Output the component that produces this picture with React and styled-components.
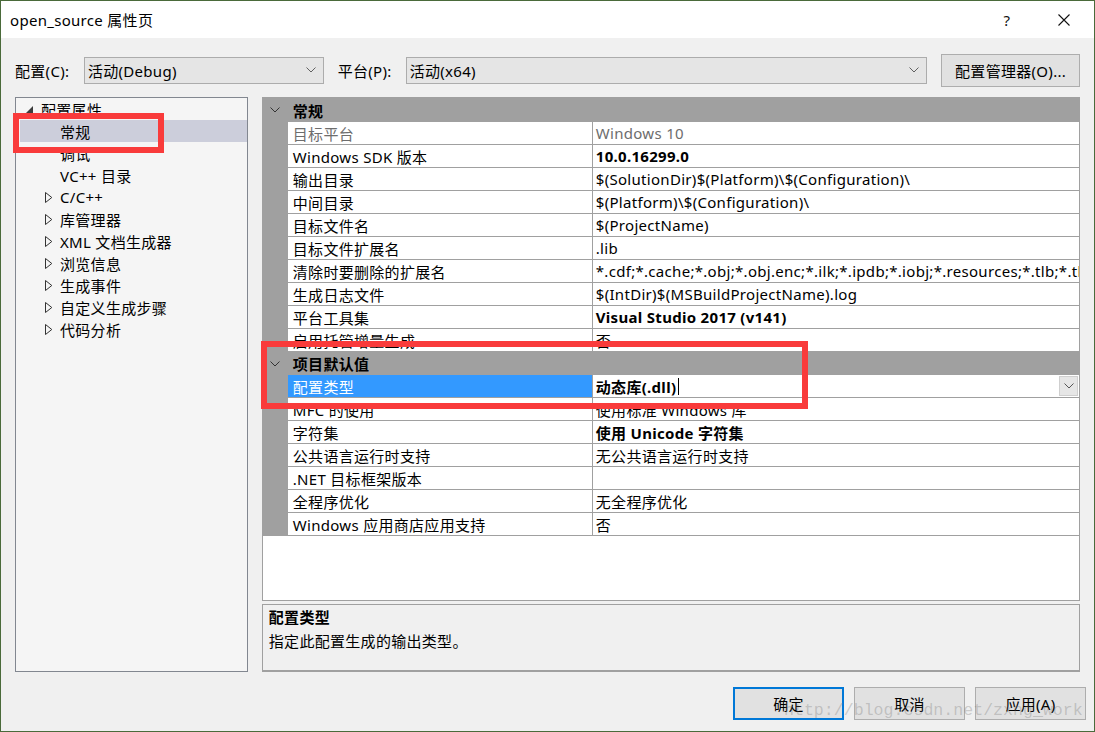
import React from "react";
import styled, { createGlobalStyle } from "styled-components";

const GlobalStyle = createGlobalStyle`
  html, body {
    margin: 0;
    padding: 0;
    background: #f0f0f0;
  }
  body {
    font-family: "Noto Sans", "Noto Sans CJK SC", sans-serif;
  }
`;

const treeItems = [
  { label: "配置属性", level: 0, open: true },
  { label: "常规", level: 1, selected: true },
  { label: "调试", level: 1 },
  { label: "VC++ 目录", level: 1 },
  { label: "C/C++", level: 1, closed: true },
  { label: "库管理器", level: 1, closed: true },
  { label: "XML 文档生成器", level: 1, closed: true },
  { label: "浏览信息", level: 1, closed: true },
  { label: "生成事件", level: 1, closed: true },
  { label: "自定义生成步骤", level: 1, closed: true },
  { label: "代码分析", level: 1, closed: true },
];

const generalRows = [
  { name: "目标平台", value: "Windows 10", muted: true },
  { name: "Windows SDK 版本", value: "10.0.16299.0", bold: true },
  { name: "输出目录", value: "$(SolutionDir)$(Platform)\\$(Configuration)\\" },
  { name: "中间目录", value: "$(Platform)\\$(Configuration)\\" },
  { name: "目标文件名", value: "$(ProjectName)" },
  { name: "目标文件扩展名", value: ".lib" },
  { name: "清除时要删除的扩展名", value: "*.cdf;*.cache;*.obj;*.obj.enc;*.ilk;*.ipdb;*.iobj;*.resources;*.tlb;*.tli;*" },
  { name: "生成日志文件", value: "$(IntDir)$(MSBuildProjectName).log" },
  { name: "平台工具集", value: "Visual Studio 2017 (v141)", bold: true },
  { name: "启用托管增量生成", value: "否" },
];

const defaultRows = [
  { name: "MFC 的使用", value: "使用标准 Windows 库" },
  { name: "字符集", value: "使用 Unicode 字符集", bold: true },
  { name: "公共语言运行时支持", value: "无公共语言运行时支持" },
  { name: ".NET 目标框架版本", value: "" },
  { name: "全程序优化", value: "无全程序优化" },
  { name: "Windows 应用商店应用支持", value: "否" },
];

const Chevron = ({ color = "#606060" }) => (
  <svg width="10" height="6" viewBox="0 0 10 6">
    <polyline points="0.5,0.5 5,5 9.5,0.5" fill="none" stroke={color} strokeWidth="1" />
  </svg>
);

const App = () => {
  return (
    <>
      <GlobalStyle />
      <Window>
        <TitleBar>
          <TitleText>open_source 属性页</TitleText>
          <TitleButtons>
            <HelpBtn>?</HelpBtn>
            <CloseBtn>
              <svg width="12" height="12" viewBox="0 0 12 12">
                <path d="M0.5 0.5 L11.5 11.5 M11.5 0.5 L0.5 11.5" stroke="#111" strokeWidth="1.1" />
              </svg>
            </CloseBtn>
          </TitleButtons>
        </TitleBar>

        <Body>
          <ConfigRow>
            <ConfigLabel $w={69}>配置(C):</ConfigLabel>
            <Combo $w={240}>
              <span>活动(Debug)</span>
              <Chevron />
            </Combo>
            <ConfigLabel $w={68} $ml={14}>平台(P):</ConfigLabel>
            <Combo $w={522}>
              <span>活动(x64)</span>
              <Chevron />
            </Combo>
            <ManagerButton>配置管理器(O)...</ManagerButton>
          </ConfigRow>

          <Main>
            <Tree>
              {treeItems.map((item) => (
                <TreeRow key={item.label} $level={item.level} $selected={item.selected}>
                  <Expander>
                    {item.open && (
                      <svg width="7" height="7" viewBox="0 0 7 7">
                        <polygon points="7,0 7,7 0,7" fill="#3c3c3c" />
                      </svg>
                    )}
                    {item.closed && (
                      <svg width="8" height="11" viewBox="0 0 8 11">
                        <polygon points="0.5,0.5 6.8,5.5 0.5,10.5" fill="none" stroke="#333" strokeWidth="1" />
                      </svg>
                    )}
                  </Expander>
                  <span>{item.label}</span>
                </TreeRow>
              ))}
            </Tree>

            <RightColumn>
              <PropGrid>
                <CategoryRow $h={24}>
                  <Gutter>
                    <Chevron color="#333" />
                  </Gutter>
                  <span>常规</span>
                </CategoryRow>
                {generalRows.map((row) => (
                  <PropRow key={row.name}>
                    <GutterCell />
                    <NameCell $muted={row.muted}>{row.name}</NameCell>
                    <ValueCell $bold={row.bold} $muted={row.muted}>
                      {row.value}
                    </ValueCell>
                  </PropRow>
                ))}
                <CategoryRow $h={23}>
                  <Gutter>
                    <Chevron color="#333" />
                  </Gutter>
                  <span>项目默认值</span>
                </CategoryRow>
                <PropRow>
                  <GutterCell />
                  <NameCell $selected>配置类型</NameCell>
                  <ValueCell $bold>
                    <span>动态库(.dll)</span>
                    <Caret />
                    <DropButton>
                      <Chevron color="#555" />
                    </DropButton>
                  </ValueCell>
                </PropRow>
                {defaultRows.map((row) => (
                  <PropRow key={row.name}>
                    <GutterCell />
                    <NameCell>{row.name}</NameCell>
                    <ValueCell $bold={row.bold}>{row.value}</ValueCell>
                  </PropRow>
                ))}
              </PropGrid>

              <Description>
                <DescTitle>配置类型</DescTitle>
                <DescText>指定此配置生成的输出类型。</DescText>
              </Description>
            </RightColumn>
          </Main>

          <ButtonRow>
            <DialogButton $primary>确定</DialogButton>
            <DialogButton>取消</DialogButton>
            <DialogButton>应用(A)</DialogButton>
          </ButtonRow>
        </Body>

        <Highlight $x={12} $y={112} $w={151} $h={40} />
        <Highlight $x={260} $y={340} $w={547} $h={68} />
        <Watermark>http://blog.csdn.net/zxng_work</Watermark>
      </Window>
    </>
  );
};

const Window = styled.div`
  position: relative;
  width: 1095px;
  height: 732px;
  box-sizing: border-box;
  border: 1px solid #4a6a3a;
  background: #f0f0f0;
  display: flex;
  flex-direction: column;
  font-family: "Noto Sans", "Noto Sans CJK SC", sans-serif;
  font-size: 15px;
  letter-spacing: 0.3px;
  color: #000;
  overflow: hidden;
`;

const TitleBar = styled.div`
  height: 37px;
  background: #fff;
  display: flex;
  align-items: center;
  padding-left: 9px;
  flex-shrink: 0;
`;

const TitleText = styled.div`
  font-size: 15px;
  color: #000;
`;

const TitleButtons = styled.div`
  margin-left: auto;
  display: flex;
  align-items: center;
  height: 100%;
`;

const HelpBtn = styled.div`
  width: 24px;
  text-align: center;
  font-size: 15px;
  color: #111;
  margin-right: 22px;
`;

const CloseBtn = styled.div`
  width: 46px;
  height: 100%;
  display: flex;
  align-items: center;
  justify-content: center;
  margin-right: 7px;
`;

const Body = styled.div`
  flex: 1;
  display: flex;
  flex-direction: column;
  padding: 16px 14px 0 14px;
`;

const ConfigRow = styled.div`
  display: flex;
  align-items: center;
  height: 32px;
`;

const ConfigLabel = styled.div`
  width: ${(p) => p.$w}px;
  margin-left: ${(p) => p.$ml || 0}px;
  white-space: nowrap;
`;

const Combo = styled.div`
  width: ${(p) => p.$w}px;
  height: 27px;
  box-sizing: border-box;
  background: #e5e5e5;
  border: 1px solid #acacac;
  display: flex;
  align-items: center;
  justify-content: space-between;
  padding: 0 7px 0 3px;
`;

const ManagerButton = styled.div`
  margin-left: 14px;
  width: 139px;
  height: 33px;
  box-sizing: border-box;
  background: #e1e1e1;
  border: 1px solid #adadad;
  display: flex;
  align-items: center;
  justify-content: center;
  white-space: nowrap;
`;

const Main = styled.div`
  display: flex;
  gap: 14px;
  margin-top: 11px;
`;

const Tree = styled.div`
  width: 233px;
  height: 575px;
  box-sizing: border-box;
  border: 1px solid #828790;
  background: #f5f5f5;
  padding-left: 4px;
`;

const TreeRow = styled.div`
  height: 22px;
  display: flex;
  align-items: center;
  padding-left: ${(p) => (p.$level === 0 ? 6 : 25)}px;
  background: ${(p) => (p.$selected ? "#cccedb" : "transparent")};
  white-space: nowrap;
`;

const Expander = styled.div`
  width: 15px;
  height: 22px;
  display: flex;
  align-items: center;
`;

const RightColumn = styled.div`
  width: 819px;
  display: flex;
  flex-direction: column;
  gap: 3px;
`;

const PropGrid = styled.div`
  height: 504px;
  box-sizing: border-box;
  border: 1px solid #a0a0a0;
  background: #fff;
  overflow: hidden;
`;

const CategoryRow = styled.div`
  height: ${(p) => p.$h}px;
  background: #a0a0a0;
  display: flex;
  align-items: center;
  font-weight: bold;
`;

const Gutter = styled.div`
  width: 30px;
  display: flex;
  justify-content: center;
  padding-right: 5px;
  box-sizing: border-box;
`;

const PropRow = styled.div`
  display: grid;
  grid-template-columns: 25px 305px 1fr;
  height: 23px;
`;

const GutterCell = styled.div`
  background: #a0a0a0;
`;

const NameCell = styled.div`
  box-sizing: border-box;
  border-bottom: 1px solid #a0a0a0;
  border-right: 1px solid #a0a0a0;
  padding-left: 5px;
  display: flex;
  align-items: center;
  white-space: nowrap;
  overflow: hidden;
  background: ${(p) => (p.$selected ? "#3399ff" : "#fff")};
  color: ${(p) => (p.$selected ? "#fff" : p.$muted ? "#6d6d6d" : "#000")};
`;

const ValueCell = styled.div`
  box-sizing: border-box;
  border-bottom: 1px solid #a0a0a0;
  padding-left: 3px;
  display: flex;
  align-items: center;
  white-space: nowrap;
  overflow: hidden;
  font-weight: ${(p) => (p.$bold ? "bold" : "normal")};
  color: ${(p) => (p.$muted ? "#6d6d6d" : "#000")};
`;

const Caret = styled.div`
  width: 1px;
  height: 17px;
  background: #000;
  margin-left: 2px;
`;

const DropButton = styled.div`
  margin-left: auto;
  margin-right: 1px;
  width: 19px;
  height: 20px;
  box-sizing: border-box;
  background: #e6e6e6;
  border: 1px solid #cfcfcf;
  display: flex;
  align-items: center;
  justify-content: center;
`;

const Description = styled.div`
  height: 68px;
  box-sizing: border-box;
  border: 1px solid #a0a0a0;
  border-bottom-width: 2px;
  background: #f0f0f0;
  padding: 2px 6px;
`;

const DescTitle = styled.div`
  font-weight: bold;
  line-height: 20px;
`;

const DescText = styled.div`
  line-height: 20px;
  margin-top: 4px;
`;

const ButtonRow = styled.div`
  display: flex;
  justify-content: flex-end;
  gap: 10px;
  margin-top: 15px;
  margin-right: -6px;
`;

const DialogButton = styled.div`
  width: 111px;
  height: 33px;
  box-sizing: border-box;
  background: #e1e1e1;
  border: ${(p) => (p.$primary ? "2px solid #0078d7" : "1px solid #adadad")};
  display: flex;
  align-items: center;
  justify-content: center;
`;

const Highlight = styled.div`
  position: absolute;
  left: ${(p) => p.$x}px;
  top: ${(p) => p.$y}px;
  width: ${(p) => p.$w}px;
  height: ${(p) => p.$h}px;
  box-sizing: border-box;
  border: 6px solid #f93b3b;
  pointer-events: none;
`;

const Watermark = styled.div`
  position: absolute;
  left: 783px;
  top: 700px;
  font-family: "Liberation Mono", monospace;
  font-size: 16.6px;
  letter-spacing: 0;
  color: rgba(110, 110, 110, 0.3);
  pointer-events: none;
  white-space: nowrap;
`;

export default App;
